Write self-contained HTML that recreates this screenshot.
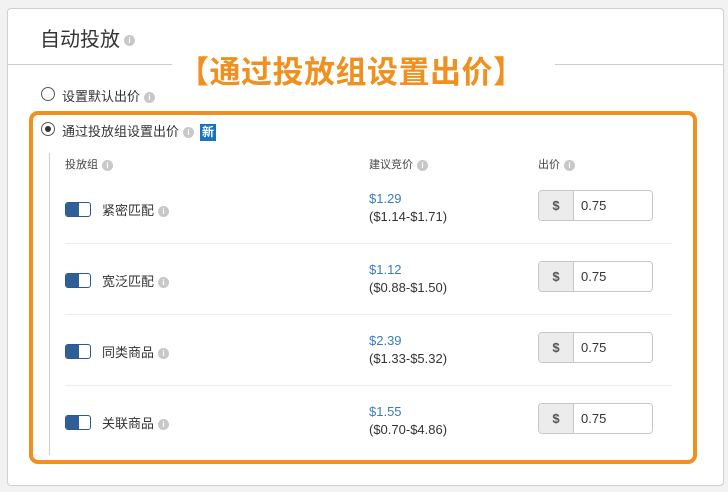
<!DOCTYPE html>
<html><head><meta charset="utf-8"><style>
*{margin:0;padding:0;box-sizing:border-box}
body{width:728px;height:492px;background:#f2f2f2;position:relative;overflow:hidden;font-family:"Liberation Sans","Noto Sans CJK SC",sans-serif;color:#333}
.a{position:absolute}
.i{display:inline-block;width:11px;height:11px;border-radius:50%;background:#c8c8c8;color:#fff;font-size:8px;line-height:11px;text-align:center;font-weight:bold;vertical-align:middle;margin-left:4px}
.card{left:7px;top:8px;width:717px;height:478px;background:#fff;border:1px solid #d0d0d0;border-radius:4px}
.tg{width:26px;height:15px;border:1.5px solid #2a5a8f;border-radius:3px;background:#fff;overflow:hidden}
.tg:before{content:"";position:absolute;left:0;top:0;width:13px;height:100%;background:#2f5f96}
.lbl{font-size:13px}
.sug{font-size:13px;line-height:18px}
.sug b{color:#3b7bbd;font-weight:normal}
.inp{width:115px;height:31px;border:1px solid #c7c7c7;border-radius:4px;background:#fff;font-size:13px;overflow:hidden}
.inp span{position:absolute;left:0;top:0;width:35px;height:29px;background:#ececec;border-right:1px solid #c7c7c7;text-align:center;line-height:29px;font-weight:bold;color:#555}
.inp em{position:absolute;left:42px;top:0;line-height:29px;font-style:normal;color:#333}
.sep{left:65px;width:607px;height:1px;background:#ececec}
</style></head><body>
<div class="a card"></div>
<div class="a" style="left:8px;top:64px;width:716px;height:1px;background:#ccc"></div>
<div class="a" style="left:40px;top:23px;font-size:20px;color:#333">自动投放<span class="i">i</span></div>
<div class="a" style="left:172px;top:52px;width:383px;height:44px;background:#fff"></div>
<div class="a" style="left:178px;top:51px;font-size:31px;font-weight:bold;color:#f0901e;line-height:44px;letter-spacing:0.5px">【通过投放组设置出价】</div>
<div class="a" style="left:41px;top:87px;width:14px;height:14px;border:1.5px solid #555;border-radius:50%"></div>
<div class="a lbl" style="left:62px;top:86px">设置默认出价<span class="i">i</span></div>
<div class="a" style="left:29px;top:111px;width:668px;height:353px;border:4px solid #f0901e;border-radius:9px"></div>
<div class="a" style="left:41px;top:122px;width:14px;height:14px;border:1.5px solid #555;border-radius:50%"><div class="a" style="left:2.5px;top:2.5px;width:6px;height:6px;background:#333;border-radius:50%"></div></div>
<div class="a lbl" style="left:62px;top:121px">通过投放组设置出价<span class="i">i</span><span style="display:inline-block;background:#1a73c0;color:#fff;font-weight:bold;font-size:12px;padding:0 2px;margin-left:6px;line-height:17px;vertical-align:middle">新</span></div>
<div class="a" style="left:49px;top:153px;width:1px;height:302px;background:#ccc"></div>
<div class="a" style="left:65px;top:156px;font-size:11px;color:#444">投放组<span class="i">i</span></div>
<div class="a" style="left:369px;top:156px;font-size:11px;color:#444">建议竞价<span class="i">i</span></div>
<div class="a" style="left:538px;top:156px;font-size:11px;color:#444">出价<span class="i">i</span></div>

<div class="a tg" style="left:65px;top:202px"></div>
<div class="a lbl" style="left:102px;top:200px">紧密匹配<span class="i">i</span></div>
<div class="a sug" style="left:369px;top:190px"><b>$1.29</b><br>($1.14-$1.71)</div>
<div class="a inp" style="left:538px;top:190px"><span>$</span><em>0.75</em></div>
<div class="a sep" style="top:243px"></div>

<div class="a tg" style="left:65px;top:273px"></div>
<div class="a lbl" style="left:102px;top:271px">宽泛匹配<span class="i">i</span></div>
<div class="a sug" style="left:369px;top:261px"><b>$1.12</b><br>($0.88-$1.50)</div>
<div class="a inp" style="left:538px;top:261px"><span>$</span><em>0.75</em></div>
<div class="a sep" style="top:314px"></div>

<div class="a tg" style="left:65px;top:344px"></div>
<div class="a lbl" style="left:102px;top:342px">同类商品<span class="i">i</span></div>
<div class="a sug" style="left:369px;top:332px"><b>$2.39</b><br>($1.33-$5.32)</div>
<div class="a inp" style="left:538px;top:332px"><span>$</span><em>0.75</em></div>
<div class="a sep" style="top:385px"></div>

<div class="a tg" style="left:65px;top:415px"></div>
<div class="a lbl" style="left:102px;top:413px">关联商品<span class="i">i</span></div>
<div class="a sug" style="left:369px;top:403px"><b>$1.55</b><br>($0.70-$4.86)</div>
<div class="a inp" style="left:538px;top:403px"><span>$</span><em>0.75</em></div>
</body></html>
